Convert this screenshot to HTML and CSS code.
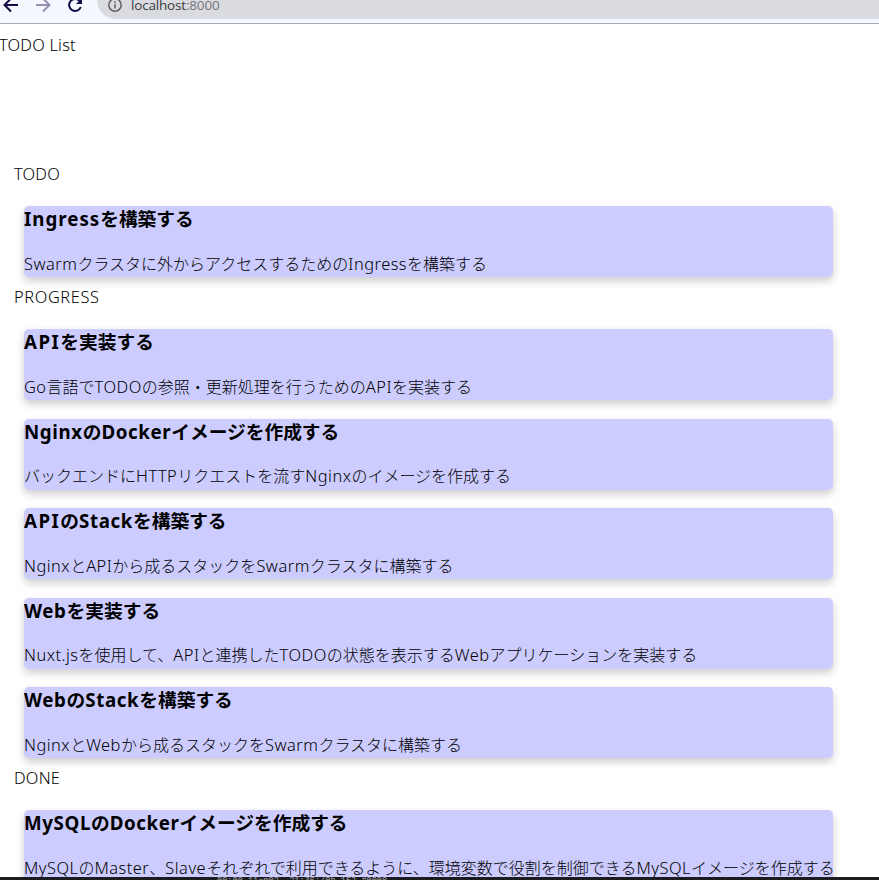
FILE: index.html
```html
<!DOCTYPE html>
<html lang="ja">
<head>
<meta charset="utf-8">
<title>TODO List</title>
<link rel="stylesheet" href="styles.css">
</head>
<body>
<header class="toolbar">
  <svg class="nav" width="92" height="22" viewBox="0 0 92 22" fill="none" stroke-width="2">
    <path stroke="#160b48" d="M18 5H5M11 -1.5L4.500 5L11 11.500"/>
    <path stroke="#958fb3" d="M36 5H49M43 -1.500L49.500 5L43 11.500"/>
    <path stroke="#160b48" d="M79.800 1.200A6 6 0 1 0 80.800 7"/>
    <path fill="#160b48" d="M82 -2V4H76Z"/>
  </svg>
  <div class="address">
    <svg width="16" height="16" viewBox="0 0 16 16" fill="none" stroke="#5f6066" stroke-width="1.500">
      <circle cx="8" cy="8" r="6.200"/><path d="M8 7V11.500M8 4.300V5.900"/>
    </svg>
    <span class="host">localhost<span class="port">:8000</span></span>
  </div>
</header>
<main>
  <div class="title"><i>TODO List</i></div>
  <section>
    <div class="label"><i>TODO</i></div>
    <article class="card"><h3><i class="wide">Ingress</i>を構築する</h3><p><i>Swarm</i>クラスタに外からアクセスするための<i>Ingress</i>を構築する</p></article>
  </section>
  <section>
    <div class="label"><i class="caps">PROGRESS</i></div>
    <article class="card"><h3><i class="wider">API</i>を実装する</h3><p><i>Go</i>言語で<i>TODO</i>の参照・更新処理を行うための<i>API</i>を実装する</p></article>
    <article class="card"><h3><i>Nginx</i>の<i>Docker</i>イメージを作成する</h3><p>バックエンドに<i>HTTP</i>リクエストを流す<i>Nginx</i>のイメージを作成する</p></article>
    <article class="card"><h3><i class="wider">API</i>の<i>Stack</i>を構築する</h3><p><i>Nginx</i>と<i>API</i>から成るスタックを<i>Swarm</i>クラスタに構築する</p></article>
    <article class="card"><h3><i>Web</i>を実装する</h3><p><i>Nuxt.js</i>を使用して、<i>API</i>と連携した<i>TODO</i>の状態を表示する<i>Web</i>アプリケーションを実装する</p></article>
    <article class="card"><h3><i>Web</i>の<i>Stack</i>を構築する</h3><p><i>Nginx</i>と<i>Web</i>から成るスタックを<i>Swarm</i>クラスタに構築する</p></article>
  </section>
  <section>
    <div class="label"><i>DONE</i></div>
    <article class="card"><h3><i>MySQL</i>の<i>Docker</i>イメージを作成する</h3><p><i>MySQL</i>の<i>Master</i>、<i>Slave</i>それぞれで利用できるように、環境変数で役割を制御できる<i>MySQL</i>イメージを作成する</p></article>
  </section>
</main>
<footer class="strip">00:00-11=m02, 21:36:/0h 152 #0000</footer>
</body>
</html>
```

FILE: styles.css
```css
* { box-sizing: border-box; }
body {
  margin: 0;
  height: 880px;
  overflow: hidden;
  background: #fff;
  color: #000;
  font: 300 16px/24px "Noto Sans", "Noto Sans CJK JP", sans-serif;
  display: flex;
  flex-direction: column;
}
/* Latin runs */
i { font-style: normal; font-size: 16.4px; line-height: 1; letter-spacing: .5px; }
.title i { letter-spacing: .2px; }
.label i { letter-spacing: .2px; }
.label .caps { letter-spacing: .6px; }
h3 i { font-size: 18.72px; font-weight: 700; letter-spacing: .62px; }
h3 .wide { letter-spacing: 1px; }
h3 .wider { letter-spacing: 1.5px; }
.toolbar {
  flex: none;
  height: 24px;
  display: flex;
  background: #f5f8fe;
  border-bottom: 1px solid #a9abaf;
}
.nav { flex: none; margin-right: 5px; }
.address {
  flex: 1;
  height: 38px;
  margin-top: -19px;
  padding: 10px 0 0 10px;
  display: flex;
  align-items: center;
  gap: 8px;
  background: #dadbe0;
  border-radius: 19px 0 0 19px;
}
.host { color: #3b3c40; font: 13.5px/20px "Open Sans", sans-serif; letter-spacing: -.18px; }
.port { color: #75767b; }
main { flex: 1; min-height: 0; overflow: hidden; white-space: nowrap; }
.title { height: 130.2px; padding-top: 9px; margin-left: -1px; }
section { padding: 0 46px 0 14px; }
.label { padding-top: 8px; height: 33.4px; }
.card {
  height: 70.8px;
  margin: 18.72px 0 0 10px;
  background: #ccf;
  border-radius: 5px;
  box-shadow: 0 4px 8px rgba(0, 0, 0, .2);
}
h3 { margin: 0 0 19.4px; font-size: 18.72px; line-height: 26px; font-weight: 700; }
p { margin: 0; line-height: 24px; }
.strip {
  flex: none;
  height: 3px;
  padding-left: 217px;
  overflow: hidden;
  background: #1b1b20;
  color: #aaa;
  font: 8.6px/8px "Liberation Mono", monospace;
  white-space: pre;
}
```
